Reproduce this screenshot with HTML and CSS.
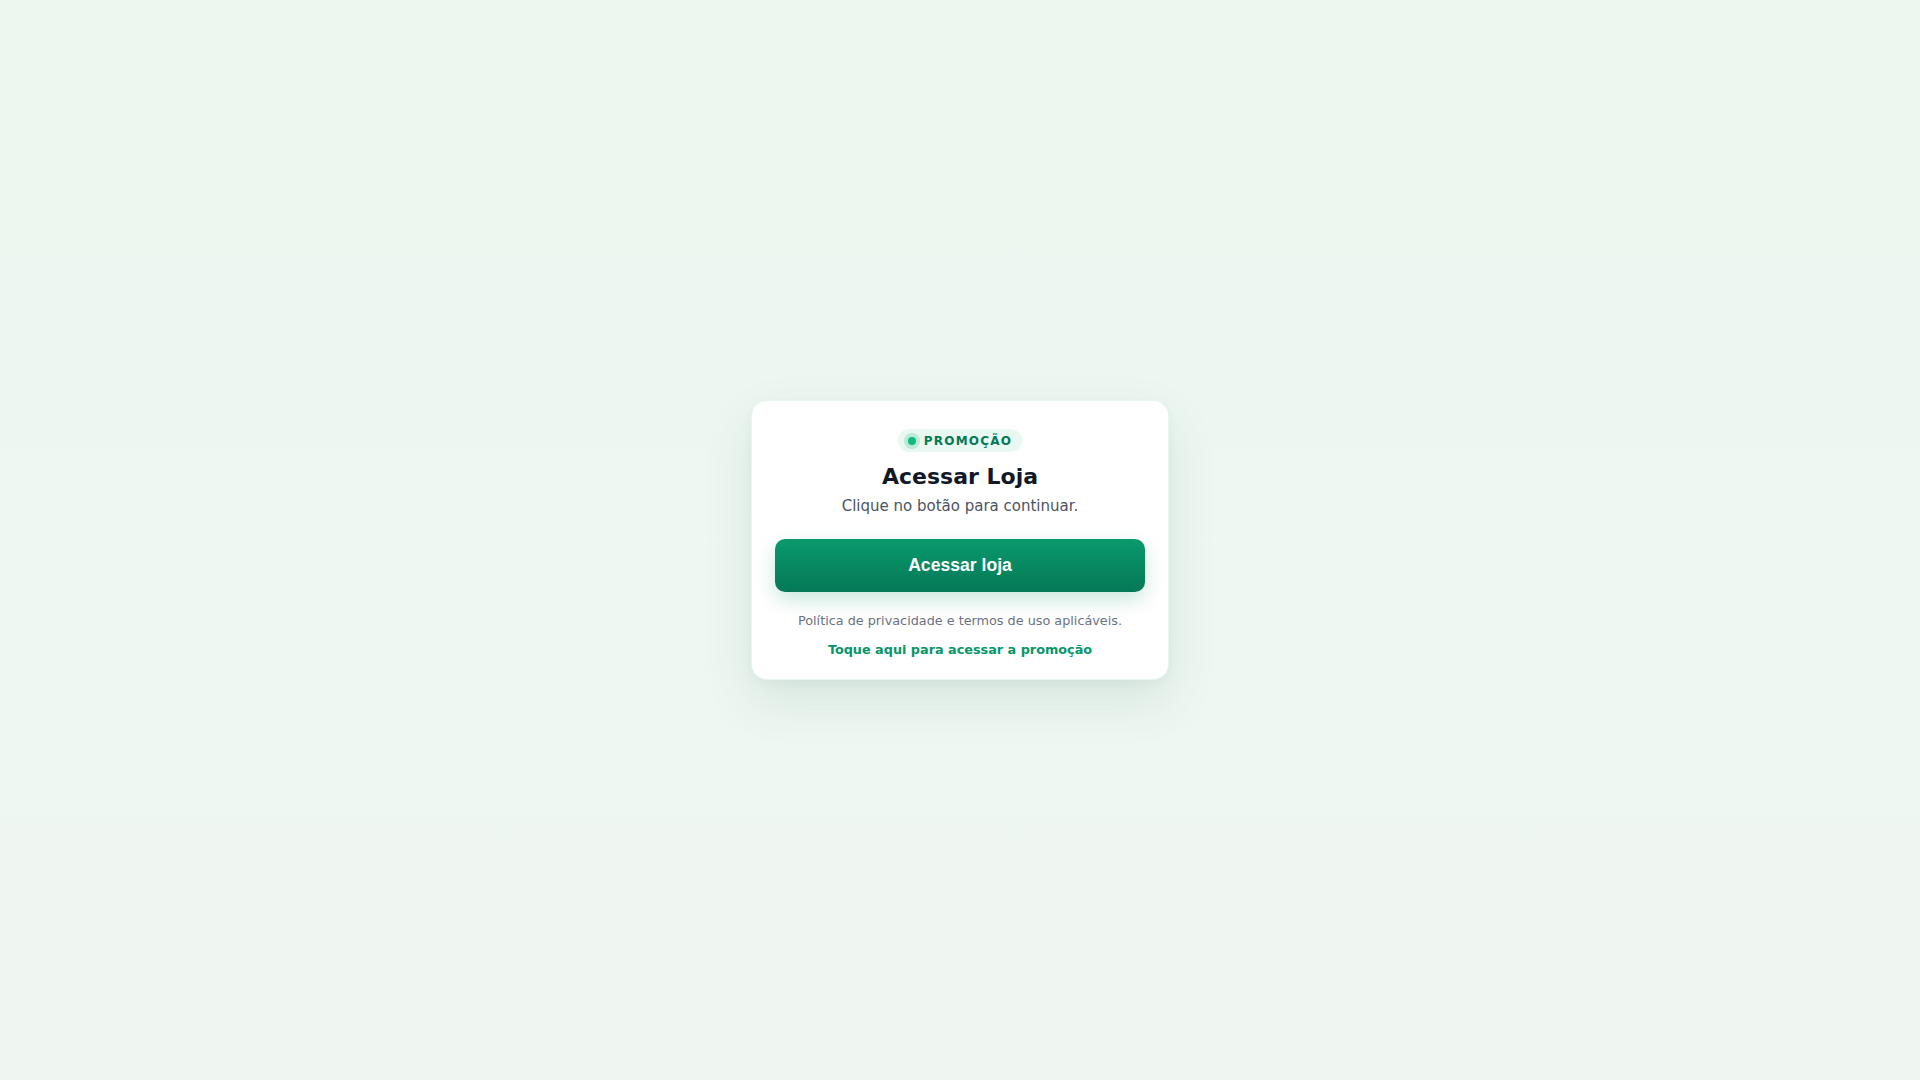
FILE: index.html
```html
<!DOCTYPE html>
<html lang="pt-BR">
<head>
<meta charset="utf-8">
<title>Acessar Loja</title>
<link rel="stylesheet" href="styles.css">
</head>
<body>
<main class="page">
  <section class="card">
    <div class="badge"><span class="dot"></span><span class="badge-text">PROMOÇÃO</span></div>
    <h1 class="title">Acessar Loja</h1>
    <p class="subtitle">Clique no botão para continuar.</p>
    <a class="btn" href="#">Acessar loja</a>
    <p class="policy">Política de privacidade e termos de uso aplicáveis.</p>
    <a class="link" href="#">Toque aqui para acessar a promoção</a>
  </section>
</main>
</body>
</html>
```

FILE: styles.css
```css
* { box-sizing: border-box; }
html, body { margin: 0; padding: 0; height: 100%; }
body {
  font-family: "DejaVu Sans", sans-serif;
  background: linear-gradient(180deg, #ebf7ef 0%, #eef7f2 50%, #eff6f1 100%);
}
.page {
  min-height: 100vh;
  display: flex;
  align-items: center;
  justify-content: center;
}
.card {
  width: 418px;
  background: #ffffff;
  border: 1px solid rgba(16, 185, 129, 0.10);
  border-radius: 16px;
  padding: 28px 23px 19px;
  display: flex;
  flex-direction: column;
  align-items: center;
  text-align: center;
  box-shadow: 0 20px 50px rgba(6, 78, 59, 0.10), 0 4px 12px rgba(6, 78, 59, 0.04);
}
.badge {
  display: flex;
  align-items: center;
  gap: 8px;
  height: 23px;
  padding: 0 10px;
  border-radius: 999px;
  background: #e9f8f1;
}
.dot {
  width: 8px;
  height: 8px;
  border-radius: 50%;
  background: #10b981;
  box-shadow: 0 0 0 4px rgba(16, 185, 129, 0.22);
}
.badge-text {
  font-size: 12px;
  font-weight: 700;
  letter-spacing: 1.2px;
  color: #047857;
}
.title {
  margin: 12px 0 0;
  font-size: 22px;
  line-height: 1.2;
  font-weight: 700;
  color: #111827;
}
.subtitle {
  margin: 4px 0 0;
  font-size: 15px;
  line-height: 1.5;
  color: #4b5563;
}
.btn {
  margin-top: 22px;
  width: 100%;
  height: 53px;
  display: flex;
  align-items: center;
  justify-content: center;
  border-radius: 10px;
  background: linear-gradient(180deg, #0a9a6c 0%, #047857 100%);
  color: #ffffff;
  font-family: "Liberation Sans", Arial, sans-serif;
  font-size: 17.6px;
  font-weight: 700;
  text-decoration: none;
  box-shadow: 0 8px 20px rgba(5, 150, 105, 0.22);
}
.policy {
  margin: 19px 0 0;
  font-size: 12.8px;
  line-height: 1.5;
  color: #6b7280;
}
.link {
  margin-top: 10px;
  font-size: 12.8px;
  line-height: 1.5;
  font-weight: 700;
  color: #059669;
  text-decoration: none;
}
```
